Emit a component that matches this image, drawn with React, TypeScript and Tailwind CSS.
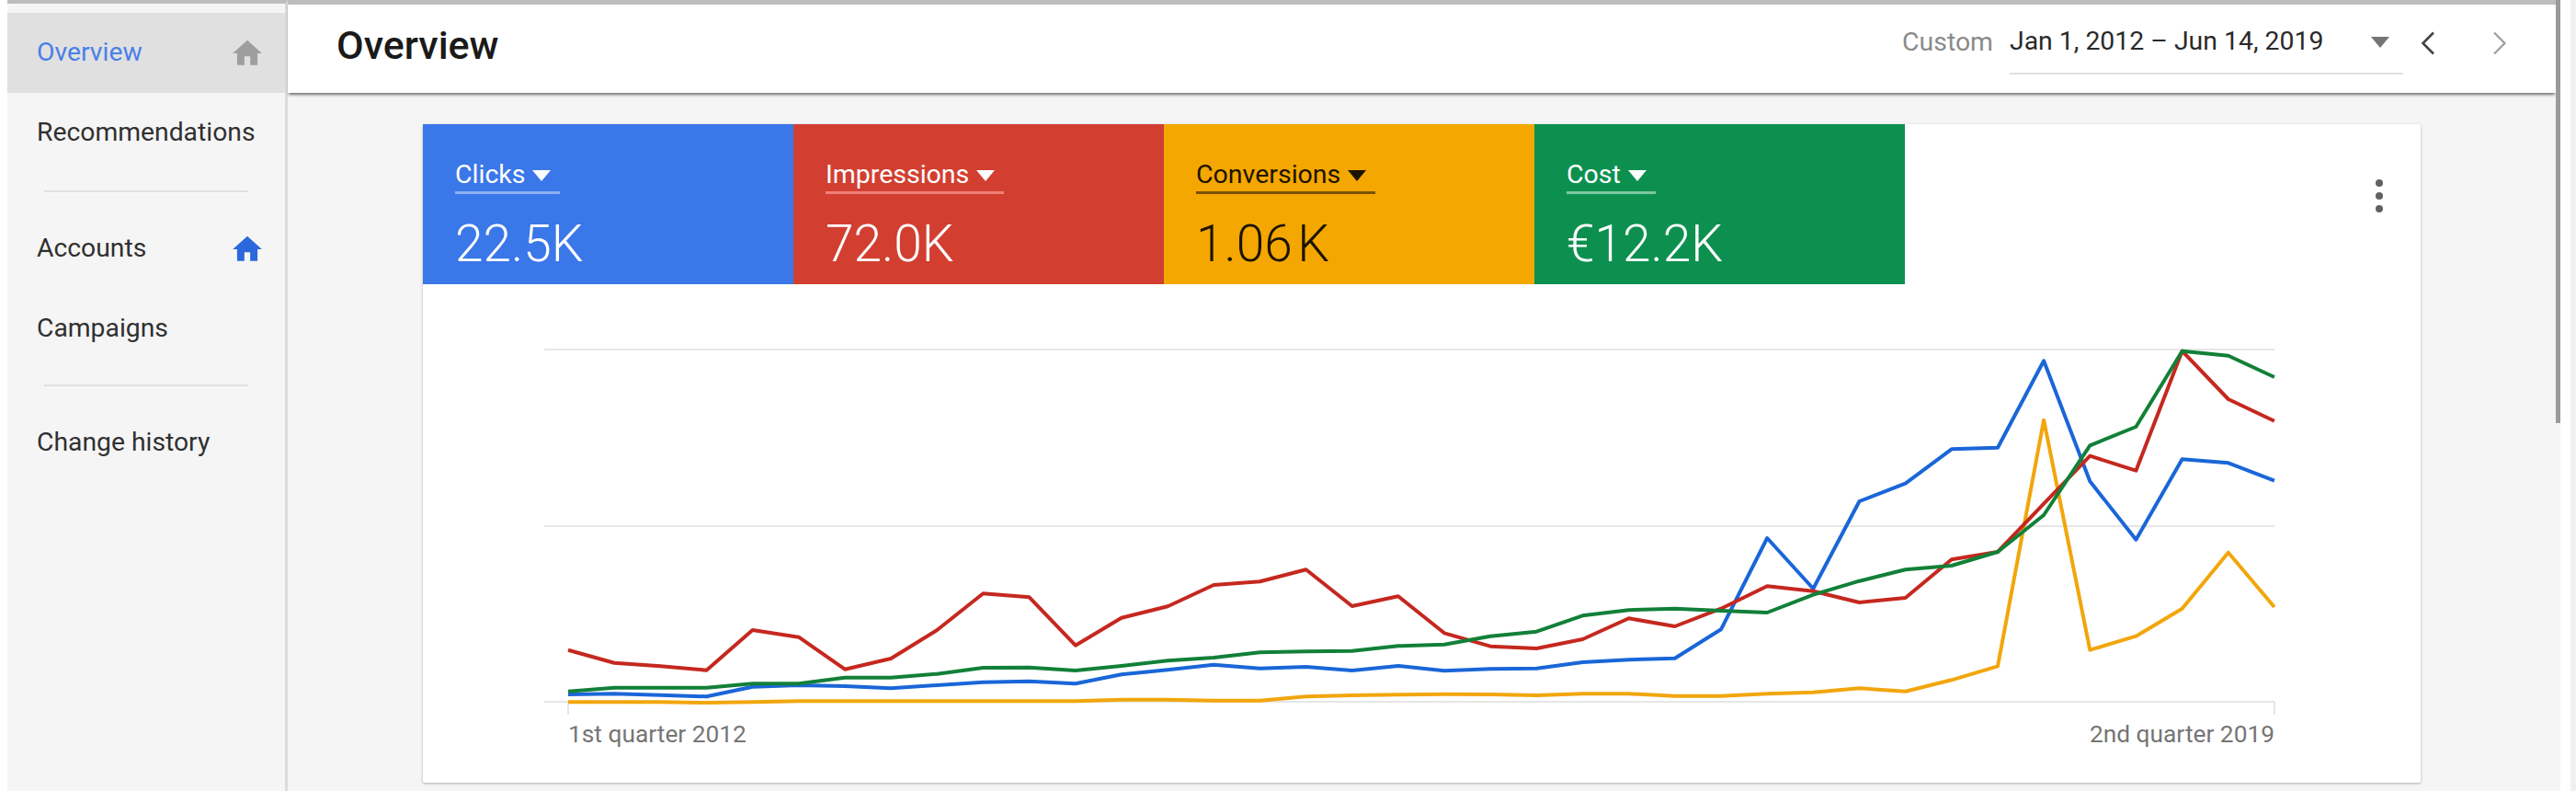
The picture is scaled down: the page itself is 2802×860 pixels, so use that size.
import React from 'react';

const RED = [1040,1082,1093,1106,975,998,1103,1068,975,856,868,1025,935,898,828,817,778,897,865,985,1028,1035,1005,937,963,905,832,848,885,870,745,720,563,407,455,65,222,293];
const GREEN = [1175,1163,1163,1163,1150,1150,1130,1130,1118,1098,1097,1107,1092,1075,1065,1048,1045,1043,1027,1022,995,980,928,910,905,912,918,860,815,778,765,720,600,373,312,65,80,150];
const BLUE = [1185,1183,1187,1192,1160,1155,1158,1165,1155,1145,1142,1150,1120,1105,1088,1100,1095,1107,1092,1108,1102,1100,1080,1072,1067,973,675,840,555,497,385,380,97,490,680,418,430,488];
const ORANGE = [1210,1210,1210,1212,1210,1207,1207,1207,1207,1207,1207,1207,1202,1202,1205,1205,1192,1188,1186,1184,1185,1188,1183,1183,1190,1190,1183,1178,1165,1175,1138,1093,290,1040,995,905,722,900];

// values were read off a 3x crop that starts at y=360; the svg starts at the card's tile bottom (y=309)
const toPoints = (vals: number[]) =>
  vals.map((v, i) => `${(158 + i * 50.16).toFixed(1)},${(v / 3 + 51).toFixed(1)}`).join(' ');

const MaterialHome = ({ className }: { className: string }) => (
  <svg className={className} viewBox="0 0 24 24" fill="currentColor">
    <path d="M10 20v-6h4v6h5v-8h3L12 3 2 12h3v8z" />
  </svg>
);

const NavRow = ({ label, active, icon }: { label: string; active?: boolean; icon?: string }) => (
  <div className={`flex h-[87px] items-center justify-between pl-8 pr-[22px] ${active ? 'bg-[#e0e0e0]' : ''}`}>
    <span className={`text-[28.3px] ${active ? 'text-[#4a7fe8]' : 'text-[#303030]'}`}>{label}</span>
    {icon && <MaterialHome className={`h-[38px] w-[38px] ${icon}`} />}
  </div>
);

const Tile = ({ label, value, bg, text, line }: { label: string; value: string; bg: string; text: string; line: string }) => (
  <div className={`h-[174px] w-[403px] pl-[35px] pt-[40px] ${bg} ${text}`}>
    <div className={`inline-flex h-[36px] items-center gap-2 border-b-[3px] pb-[2px] pr-[10px] text-[28.5px] ${line}`}>
      <span>{label}</span>
      <span className="h-0 w-0 border-x-[10px] border-t-[12px] border-x-transparent border-t-current" />
    </div>
    <div className="mt-[28px] text-[55px] font-light leading-[52px]">{value}</div>
  </div>
);

export default function App() {
  return (
    <div className="flex h-[860px] w-[2802px] overflow-hidden bg-white pl-2 font-['Roboto',sans-serif]">
      <aside className="h-full w-[305px] shrink-0 border-r-[3px] border-t-[4px] border-r-[#dcdcdc] border-t-[#bdbdbd] bg-[#f5f5f5] pt-[10px]">
        <NavRow label="Overview" active icon="text-[#9e9e9e]" />
        <NavRow label="Recommendations" />
        <div className="mx-10 mb-[18px] mt-[19px] h-[2px] bg-[#e0e0e0]" />
        <NavRow label="Accounts" icon="text-[#2a68dc]" />
        <NavRow label="Campaigns" />
        <div className="mx-10 mb-[18px] mt-[17px] h-[2px] bg-[#e0e0e0]" />
        <NavRow label="Change history" />
      </aside>

      <main className="relative flex h-full w-[2472px] shrink-0 flex-col bg-[#f5f5f5]">
        <header className="mr-[5px] flex h-[101px] shrink-0 items-center justify-between border-t-[5px] border-t-[#bdbdbd] bg-white pb-[7px] pl-[53px] shadow-[0_3px_3px_-1px_rgba(0,0,0,0.55)]">
          <h1 className="text-[43px] font-medium text-[#1a1a1a]">Overview</h1>
          <div className="flex items-center">
            <span className="mb-[6px] text-[28.4px] text-[#8a8a8a]">Custom</span>
            <div className="ml-[18px] flex h-[62px] w-[428px] items-center justify-between border-b-2 border-b-[#e0e0e0] pb-[6px] pr-[15px] text-[#2a2a2a]">
              <span className="text-[28.4px]">Jan 1, 2012 – Jun 14, 2019</span>
              <span className="h-0 w-0 border-x-[10px] border-t-[12px] border-x-transparent border-t-[#757575]" />
            </div>
            <svg className="mb-[6px] ml-[19px] h-[26px] w-[16px] text-[#444444]" viewBox="0 0 16 26" fill="none" stroke="currentColor" strokeWidth="2.6">
              <polyline points="14,1.5 2.5,13 14,24.5" />
            </svg>
            <svg className="mb-[6px] ml-[62px] mr-[53px] h-[26px] w-[16px] text-[#9e9e9e]" viewBox="0 0 16 26" fill="none" stroke="currentColor" strokeWidth="2.2">
              <polyline points="2,1.5 13.5,13 2,24.5" />
            </svg>
          </div>
        </header>

        <div className="flex-1 pl-[147px] pt-[34px]">
          <section className="h-[716px] w-[2173px] rounded-[2px] bg-white shadow-[0_1px_3px_rgba(0,0,0,0.3)]">
            <div className="flex items-start justify-between">
              <div className="flex">
                <Tile label="Clicks" value="22.5K" bg="bg-[#3a77e8]" text="text-white" line="border-b-[#8db0f2]" />
                <Tile label="Impressions" value="72.0K" bg="bg-[#d23f31]" text="text-white" line="border-b-[#f08078]" />
                <Tile label="Conversions" value={'1.06\u200AK'} bg="bg-[#f4a700]" text="text-[#1c1400]" line="border-b-[#7a5300]" />
                <Tile label="Cost" value="€12.2K" bg="bg-[#0d904f]" text="text-white" line="border-b-[#7cc8a0]" />
              </div>
              <div className="mr-[41px] mt-[60px] flex flex-col gap-[6px]">
                <span className="h-[8px] w-[8px] rounded-full bg-[#616161]" />
                <span className="h-[8px] w-[8px] rounded-full bg-[#616161]" />
                <span className="h-[8px] w-[8px] rounded-full bg-[#616161]" />
              </div>
            </div>

            <svg className="block" width="2173" height="542" viewBox="0 0 2173 542" fill="none">
              <g stroke="#e6e6e6" strokeWidth="2">
                <path d="M132 71H2014M132 263H2014M132 454H2014" />
                <path d="M158 454V468M2014 454V468" />
              </g>
              <polyline points={toPoints(ORANGE)} stroke="#f2a60c" strokeWidth="4" strokeLinejoin="round" />
              <polyline points={toPoints(BLUE)} stroke="#1a66d8" strokeWidth="4" strokeLinejoin="round" />
              <polyline points={toPoints(RED)} stroke="#c5281f" strokeWidth="4" strokeLinejoin="round" />
              <polyline points={toPoints(GREEN)} stroke="#128038" strokeWidth="4" strokeLinejoin="round" />
              <text x="158" y="498" fill="#757575" fontSize="26.3">1st quarter 2012</text>
              <text x="2014" y="498" fill="#757575" fontSize="26.3" textAnchor="end">2nd quarter 2019</text>
            </svg>
          </section>
        </div>

        {/* scrollbar thumb */}
        <div className="absolute right-0 top-0 h-[460px] w-[5px] bg-[#9a9a9a]" />
      </main>

      <div className="h-full w-[11px] shrink-0 bg-white" />
      <div className="h-full flex-1 bg-[#f0f0f0]" />
    </div>
  );
}
